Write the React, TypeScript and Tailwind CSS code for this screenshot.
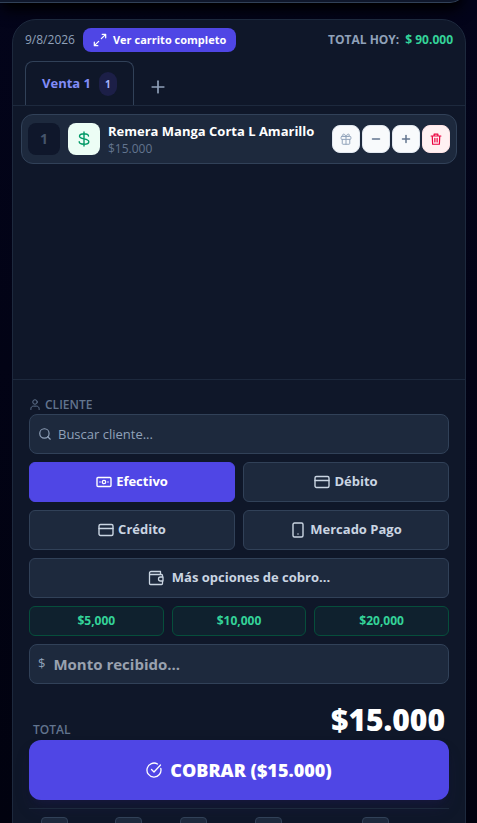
import React from 'react';
import { Minus, Plus, Search } from 'lucide-react';

type IconProps = { className?: string; children?: React.ReactNode };

function Icon({ className = 'size-4', children }: IconProps) {
  return (
    <svg
      viewBox="0 0 16 16"
      className={`shrink-0 ${className}`}
      fill="none"
      stroke="currentColor"
      strokeLinecap="round"
      strokeLinejoin="round"
      aria-hidden="true"
    >
      {children}
    </svg>
  );
}

const ExpandIcon = () => (
  <Icon className="size-3.5">
    <path d="M10.500 1.500h4v4M14.500 1.500 9.500 6.500M5.500 14.500h-4v-4M1.500 14.500l5-5" strokeWidth="1.400" />
  </Icon>
);

const DollarIcon = () => (
  <Icon className="size-4">
    <path d="M8 1v14M12.500 5c0-1.500-1.500-2.200-4.500-2.200S3.500 3.700 3.500 5.300C3.500 8.800 12.800 7 12.800 10.700c0 1.700-1.900 2.500-4.800 2.500S3.200 12.400 3.200 10.800" strokeWidth="1.400" />
  </Icon>
);

const GiftIcon = () => (
  <Icon className="size-3">
    <rect x="1.500" y="4.500" width="13" height="4" rx="1" strokeWidth="1.300" />
    <path d="M3 8.500v5.500a1 1 0 0 0 1 1h8a1 1 0 0 0 1-1V8.500M8 4.500V15M8 4.500C7 1 3.500.500 3.500 3c0 1 1 1.500 2 1.500zM8 4.500c1-3.500 4.500-4 4.500-1.500 0 1-1 1.500-2 1.500z" strokeWidth="1.300" />
  </Icon>
);

const TrashIcon = () => (
  <Icon className="size-3">
    <path d="M1.500 4h13M5.500 4V1.500h5V4M3 4l.500 11h9L13 4M6.500 7v5M9.500 7v5" strokeWidth="1.600" />
  </Icon>
);

const UserIcon = () => (
  <Icon className="size-3">
    <circle cx="8" cy="4" r="3" strokeWidth="1.300" />
    <path d="M2.500 14v-1C2.500 11 4 9.500 6 9.500h4c2 0 3.500 1.500 3.500 3.500v1" strokeWidth="1.300" />
  </Icon>
);

const CashIcon = () => (
  <Icon>
    <rect x="1" y="3.500" width="14" height="9" rx="1" strokeWidth="1.400" />
    <circle cx="8" cy="8" r="1.700" strokeWidth="1.300" />
    <path d="M4 8h.010M12 8h.010" strokeWidth="1.500" />
  </Icon>
);

const CardIcon = () => (
  <Icon>
    <rect x="1" y="2.500" width="14" height="11" rx="1.500" strokeWidth="1.400" />
    <path d="M1 6.500h14" strokeWidth="1.400" />
  </Icon>
);

const PhoneIcon = () => (
  <Icon>
    <rect x="3" y="1" width="10" height="14" rx="1.500" strokeWidth="1.400" />
    <path d="M8 12h.010" strokeWidth="1.500" />
  </Icon>
);

const WalletIcon = () => (
  <Icon>
    <path d="M14.500 6.500V5.500a1 1 0 0 0-1-1H1.500M1.500 3v10.500a1 1 0 0 0 1 1h11a1 1 0 0 0 1-1v-2M1.500 3a1.500 1.500 0 0 1 1.500-1.500h9.500v3" strokeWidth="1.300" />
    <path d="M15 7h-2.500a2 2 0 0 0 0 4H15z" strokeWidth="1.300" />
  </Icon>
);

const CheckIcon = () => (
  <Icon>
    <path d="M14.800 6.500A7 7 0 1 1 11.500 2" strokeWidth="1.300" />
    <path d="M5.500 7.500 8 10l6.500-7" strokeWidth="1.300" />
  </Icon>
);

const methods = [
  { name: 'Efectivo', icon: CashIcon, active: true },
  { name: 'Débito', icon: CardIcon, active: false },
  { name: 'Crédito', icon: CardIcon, active: false },
  { name: 'Mercado Pago', icon: PhoneIcon, active: false }
];

const amounts = ['$5,000', '$10,000', '$20,000'];

const rowButton = 'flex size-7 items-center justify-center rounded-lg border';

export default function App() {
  return (
    <div className="h-screen overflow-hidden bg-gradient-to-b from-[#03041a] to-[#01020f] font-['Open_Sans','Noto_Sans',sans-serif] text-slate-300">
      {/* Lower edge of the catalogue panel */}
      <div className="-mt-5 mr-[11px] h-[23px] rounded-br-2xl border-r border-b border-slate-700 bg-slate-900 shadow-lg shadow-black" />

      <main className="mr-[11px] ml-3 mt-4 rounded-t-3xl border border-slate-800 bg-[#0f1729]">
        {/* Header */}
        <header className="flex items-center justify-between px-3 pt-2">
          <div className="flex items-center gap-2">
            <span className="text-xs text-slate-400">9/8/2026</span>
            <button className="flex h-6 items-center gap-1.5 rounded-lg bg-[#4f46e5] px-2.5 text-[11px] font-bold text-white">
              <ExpandIcon />
              Ver carrito completo
            </button>
          </div>
          <p className="flex gap-1.5 text-xs font-bold text-slate-400">
            TOTAL HOY: <span className="text-[#34d399]">$ 90.000</span>
          </p>
        </header>

        {/* Tabs */}
        <nav className="mt-[9px] flex items-stretch gap-3.5 border-b border-slate-800 px-3">
          <button className="flex h-11 items-center gap-2 rounded-t-lg border border-b-0 border-slate-700 px-4 text-[13px] font-bold text-[#818cf8]">
            Venta 1
            <span className="rounded-full bg-[#1c1f47] px-1.5 py-1 text-[10px] leading-4 text-[#a5b4fc]">1</span>
          </button>
          <button aria-label="Nueva venta" className="flex items-center pt-2 text-slate-400">
            <Plus className="size-5" strokeWidth={2} />
          </button>
        </nav>

        {/* Cart */}
        <section className="min-h-[273px] p-2">
          <article className="flex h-[50px] items-center gap-2 rounded-xl border border-slate-700 bg-slate-800 px-1.5">
            <span className="flex size-8 shrink-0 items-center justify-center rounded-lg bg-slate-900 text-sm font-bold text-slate-600">1</span>
            <span className="flex size-8 shrink-0 items-center justify-center rounded-lg bg-emerald-50 text-emerald-600">
              <DollarIcon />
            </span>
            <div className="min-w-0 flex-1">
              <h2 className="text-[13px] leading-5 font-bold whitespace-nowrap text-white">Remera Manga Corta L Amarillo</h2>
              <p className="text-xs leading-4 text-slate-500">$15.000</p>
            </div>
            <div className="flex gap-0.5">
              <button aria-label="Regalo" className={`${rowButton} border-slate-200 bg-slate-50 text-slate-400`}>
                <GiftIcon />
              </button>
              <button aria-label="Restar" className={`${rowButton} border-slate-200 bg-slate-50 text-slate-500`}>
                <Minus className="size-3" strokeWidth={3} />
              </button>
              <button aria-label="Sumar" className={`${rowButton} border-slate-200 bg-slate-50 text-slate-500`}>
                <Plus className="size-3" strokeWidth={3} />
              </button>
              <button aria-label="Eliminar" className={`${rowButton} border-rose-100 bg-rose-50 text-rose-600`}>
                <TrashIcon />
              </button>
            </div>
          </article>
        </section>

        {/* Checkout */}
        <section className="border-t border-slate-800 px-4 pt-4">
          <label htmlFor="cliente" className="flex h-[18px] items-center gap-1 text-xs font-semibold text-slate-500">
            <UserIcon />
            CLIENTE
          </label>
          <div className="flex h-10 items-center gap-1.5 rounded-lg border border-slate-700 bg-slate-800 px-2">
            <Search className="size-3.5 shrink-0 text-slate-400" strokeWidth={2} />
            <input
              id="cliente"
              type="text"
              placeholder="Buscar cliente..."
              className="min-w-0 flex-1 bg-transparent pt-px text-[13px] outline-none placeholder:text-slate-400"
            />
          </div>

          <div className="mt-2 grid grid-cols-2 gap-2">
            {methods.map((method) => (
              <button
                key={method.name}
                className={`flex h-10 items-center justify-center gap-1 rounded-md border text-[13px] font-bold ${
                  method.active ? 'border-[#4f46e5] bg-[#4f46e5] text-white' : 'border-slate-700 bg-slate-800 text-slate-300'
                }`}
              >
                <method.icon />
                {method.name}
              </button>
            ))}
            <button className="col-span-2 flex h-10 items-center justify-center gap-2 rounded-md border border-slate-700 bg-slate-800 text-[13px] font-bold">
              <WalletIcon />
              Más opciones de cobro...
            </button>
          </div>

          <div className="mt-2 grid grid-cols-3 gap-2">
            {amounts.map((amount) => (
              <button key={amount} className="h-[30px] rounded-md border border-[#064e3b] bg-[#0f212e] text-xs font-bold text-[#34d399]">
                {amount}
              </button>
            ))}
          </div>

          <div className="mt-2 flex h-10 items-center gap-2 rounded-lg border border-slate-700 bg-slate-800 px-2">
            <label htmlFor="monto" className="text-[13px] text-slate-400">$</label>
            <input
              id="monto"
              type="text"
              placeholder="Monto recibido..."
              className="min-w-0 flex-1 bg-transparent pt-px text-[15px] font-bold outline-none placeholder:text-[#99a1af]"
            />
          </div>

          <div className="mt-4 flex h-10 items-end justify-between px-1">
            <span className="pb-0.5 text-xs font-semibold text-slate-500">TOTAL</span>
            <strong className="text-[30px] leading-10 font-extrabold text-white">$15.000</strong>
          </div>
          <button className="flex h-15 w-full items-center justify-center gap-2 rounded-xl bg-[#4f46e5] text-lg font-extrabold text-white shadow-lg shadow-indigo-950/40">
            <CheckIcon />
            COBRAR ($15.000)
          </button>

          {/* Keyboard shortcuts */}
          <div className="mt-2 grid grid-cols-[74fr_65fr_75fr_107fr_75fr] border-t border-slate-800 px-3 pt-2">
            {['search', 'quantity', 'client', 'payment', 'finish'].map((key) => (
              <kbd key={key} className="h-5 w-[27px] rounded border border-slate-700 bg-slate-800" />
            ))}
          </div>
        </section>
      </main>
    </div>
  );
}
